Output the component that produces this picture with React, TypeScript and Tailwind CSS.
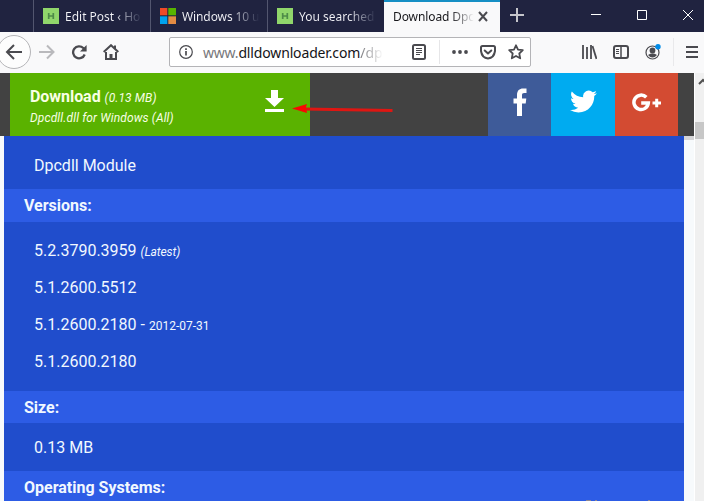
import type { ReactNode } from "react";

const UI = "font-['Noto_Sans','Open_Sans',sans-serif]";

function Icon({ size = 16, className = "", children }: { size?: number; className?: string; children: ReactNode }) {
  return (
    <svg width={size} height={size} viewBox={`0 0 ${size} ${size}`} fill="none" stroke="#4a4a4f" strokeWidth="2" className={`block shrink-0 ${className}`}>
      {children}
    </svg>
  );
}

function GreenFavicon() {
  return (
    <svg width="16" height="16" viewBox="0 0 16 16" className="block shrink-0">
      <path fill="#90d66b" d="M0 0h16v16H0z" />
      <path stroke="#4d8b48" strokeWidth="1.7" d="M5.7 5v6M10.3 5v6M5.7 8h4.6" />
    </svg>
  );
}

function WindowsFavicon() {
  return (
    <svg width="16" height="16" viewBox="0 0 16 16" className="block shrink-0">
      <path fill="#f04a27" d="M0 0h7.3v7.3H0z" />
      <path fill="#58b300" d="M8.3 0H16v7.3H8.3z" />
      <path fill="#00a2ed" d="M0 8.3h7.3V16H0z" />
      <path fill="#e38b43" d="M8.3 8.3H16V16H8.3z" />
    </svg>
  );
}

function Tab({ icon, children }: { icon: ReactNode; children: ReactNode }) {
  return (
    <div className="flex h-8 w-[117px] shrink-0 items-center border-l border-[#53566f] pl-[9px]">
      {icon}
      <span className="ml-[6px] w-[82px] whitespace-nowrap bg-gradient-to-r from-[#f4f4f8] from-60% to-[#202340] to-95% bg-clip-text pt-px text-[12px] leading-5 text-transparent">
        {children}
      </span>
    </div>
  );
}

function TabBar() {
  return (
    <div className={`flex h-8 shrink-0 bg-[#202340] pl-[33px] ${UI}`}>
      <Tab icon={<GreenFavicon />}>Edit Post ‹ Ho</Tab>
      <Tab icon={<WindowsFavicon />}><span className="tracking-[-0.1px]">Windows 10 u</span></Tab>
      <Tab icon={<GreenFavicon />}>You searched</Tab>
      <div className="flex h-8 w-[116px] shrink-0 items-center border-t-2 border-[#168fc4] bg-[#f9f9fa] pl-[9px]">
        <span className="w-[81px] whitespace-nowrap bg-gradient-to-r from-[#17171b] from-70% to-[#f9f9fa] to-100% bg-clip-text text-[12px] leading-5 tracking-[-0.1px] text-transparent">Download Dpc</span>
        <Icon size={12} className="ml-[3px]"><path d="m2 1 8 9M10 1 2 10" /></Icon>
      </div>
      <svg width="204" height="32" viewBox="0 0 204 32" fill="none" stroke="#fff" className="block shrink-0">
        <path stroke="#c5c5cb" strokeWidth="2" d="M10 15h14M17 8v14" />
        <path d="M91 14.5h10M137.500 10.500h9v9h-9zM183 10l10 10M193 10l-10 10" />
      </svg>
    </div>
  );
}

function Toolbar() {
  return (
    <div className={`flex h-[41px] shrink-0 items-center bg-[#f9f9fa] pb-px ${UI}`}>
      <svg width="32" height="40" viewBox="0 0 32 40" fill="none" className="block shrink-0">
        <circle cx="14" cy="20" r="16.500" fill="#fdfdfd" stroke="#b5b5b8" />
        <path stroke="#4a4a4f" strokeWidth="2" d="M22 20H7.500M14 13l-7 7 7 7" />
      </svg>
      <Icon className="ml-[7px]"><path stroke="#b9b9bc" d="M0 8h14M8 1.500 14.500 8 8 14.500" /></Icon>
      <Icon className="ml-4"><path strokeWidth="2.300" d="M13.700 10.500A6 6 0 1 1 12.300 4L14 5.700" /><path fill="#4a4a4f" stroke="none" d="M15.600 1v6.500H9z" /></Icon>
      <Icon className="ml-4"><path d="M.7 8 8 1.200 15.300 8" /><path d="M3 8v7h10V8" /><path strokeWidth="3" d="M8 15v-5" /><path fill="#4a4a4f" stroke="none" d="M11 1.500h2V6l-2-2z" /></Icon>
      <div className="ml-[50px] flex h-[30px] w-[362px] shrink-0 items-center rounded-[2px] border border-[#b4b4b7] bg-white pl-[9px]">
        <Icon size={14}><circle cx="7" cy="7" r="6.300" strokeWidth="1.200" /><path strokeWidth="1.700" d="M7 6v4.500M7 3.300V5" /></Icon>
        <span className="ml-[10px] w-[176px] whitespace-nowrap pt-px text-[14px] leading-5 text-[#141417]">
          <span className="text-[#77777b] tracking-[-0.2px]">www.</span><span className="tracking-[-0.15px]">dlldownloader.com</span><span className="bg-gradient-to-r from-[#77777b] to-white bg-clip-text text-transparent">/dp</span>
        </span>
        <Icon className="ml-[32px]"><rect x="2" y="1" width="12" height="14" rx="1.500" strokeWidth="2" /><path strokeWidth="1" d="M5 4.500h6M5 6.500h6M5 8.500h6M5 10.500h4" /></Icon>
        <div className="ml-3 h-6 w-px bg-[#e6e6e8]" />
        <Icon className="ml-[12px]"><g fill="#4a4a4f" stroke="none"><circle cx="2" cy="8" r="1.900" /><circle cx="8" cy="8" r="1.900" /><circle cx="14" cy="8" r="1.900" /></g></Icon>
        <Icon className="ml-3"><path d="M2.500 2h11Q15 2 15 3.500V7Q14 14 8 14.500Q2 14 1 7V3.500Q1 2 2.500 2Z" /><path strokeLinecap="round" strokeLinejoin="round" d="m4.700 6.500 3.300 3 3.300-3" /></Icon>
        <Icon className="ml-3"><path strokeWidth="1.800" strokeLinejoin="round" d="m8 1.300 2 4.300 4.800.6-3.500 3.300.9 4.800L8 12l-4.200 2.300.9-4.800-3.500-3.300L6 5.600Z" /></Icon>
      </div>
      <Icon className="ml-[50px]"><path d="M2 1v14M6 3v12M10 1v14" strokeWidth="1.800" /><path d="m11.500 2 4 13" strokeWidth="1.800" /></Icon>
      <Icon className="ml-4"><rect x="1" y="2" width="14" height="12" rx="2" /><path strokeWidth="1.500" d="M8 2v12" /><path strokeWidth="1" d="M3 5.500h3M3 7.500h3M3 9.500h3" /></Icon>
      <Icon className="ml-4"><circle cx="7.500" cy="8.500" r="6.500" strokeWidth="1.200" /><circle cx="7.500" cy="6.500" r="2.900" fill="#4a4a4f" stroke="none" /><path fill="#4a4a4f" stroke="none" d="M3 11q4.500-2.800 9 0-4.500 5-9 0" /><circle cx="13" cy="2.700" r="2.700" fill="#008be8" stroke="none" /></Icon>
      <div className="ml-3 h-7 w-px bg-[#e9e9eb]" />
      <Icon className="ml-[10px]"><path d="M2 3h12M2 8h12M2 13h12" /></Icon>
    </div>
  );
}

function DownloadBar() {
  return (
    <div className="relative z-10 flex h-[63px] w-[694px] bg-[#424242] pl-[10px]">
      <div className="flex w-[300px] justify-between bg-[#5ab200] pl-5 pt-[14px] text-[#f8ffe4]">
        <div>
          <div className="text-[16px] leading-[19px]"><b className="tracking-[-0.05px]">Download</b> <i className="text-[12px] tracking-[0.1px]">(0.13 MB)</i></div>
          <div className="mt-px text-[12px] italic leading-[19px] tracking-[0.13px]">Dpcdll.dll for Windows (All)</div>
        </div>
        <svg width="19" height="22" viewBox="0 0 19 22" fill="#fff" className="mr-[26px] mt-[3px] block">
          <path d="M6 0h7v8h6l-9.500 9L0 8h6zM0 19h19v3H0z" />
        </svg>
      </div>
      <div className="ml-[178px] flex w-[63px] items-center justify-center bg-[#3e5b99]">
        <svg width="14" height="28" viewBox="0 0 14 28" fill="#fff" className="mb-[5px] block"><path d="M4 28V15.500H.5v-5H4V7.200C4 2.500 6.500.5 10 .5h3.500v4.600h-2.300c-1.700 0-2.200.8-2.200 2.200v3.200h4.300l-.6 5H9V28z" /></svg>
      </div>
      <div className="flex w-16 items-center justify-center bg-[#00abf0]">
        <svg width="27" height="27" viewBox="0 0 24 24" fill="#fff" className="mb-[6px] block"><path d="M23.950 4.570a10 10 0 0 1-2.820.77 4.960 4.960 0 0 0 2.160-2.720 9.900 9.900 0 0 1-3.120 1.190 4.920 4.920 0 0 0-8.390 4.480A13.930 13.930 0 0 1 1.640 3.160a4.920 4.920 0 0 0 1.520 6.570 4.900 4.900 0 0 1-2.230-.61v.06a4.920 4.920 0 0 0 3.950 4.830 5 5 0 0 1-2.210.08 4.940 4.940 0 0 0 4.600 3.420A9.870 9.870 0 0 1 0 19.540a13.940 13.940 0 0 0 7.550 2.210c9.050 0 14-7.500 14-13.980l-.02-.64a9.900 9.900 0 0 0 2.420-2.560z" /></svg>
      </div>
      <div className="flex w-[63px] items-center justify-center bg-[#d34b32]">
        <svg width="30" height="20" viewBox="0 0 30 20" fill="none" stroke="#fff" className="mb-[3px] block"><path strokeWidth="3.500" d="M14.300 4.300A7.200 7.200 0 1 0 16.300 10H9.200" /><path strokeWidth="3" d="M20.500 10H29M24.700 5.800v8.400" /></svg>
      </div>
      <svg width="101" height="10" viewBox="0 0 101 10" className="absolute left-[292px] top-[31px] block">
        <path stroke="#df1612" strokeWidth="3" d="m12 5 88.500 1.500" />
        <path fill="#fa0803" d="M0 4.500 15 0l-1 3 1 6z" />
      </svg>
    </div>
  );
}

function SectionTitle({ className, children }: { className: string; children: ReactNode }) {
  return <h2 className={`bg-[#2d5ce5] pl-5 text-[16px] font-bold leading-[33px] ${className}`}>{children}</h2>;
}

function ModuleDetails() {
  return (
    <main className="relative ml-1 w-[680px] bg-[#204dcc] text-[16px] leading-[37px] text-[#f1f8ff]">
      <div className="h-[53px] pl-[30px] pt-[11px]">Dpcdll Module</div>
      <SectionTitle className="h-[33px]">Versions:</SectionTitle>
      <ul className="h-[169px] pl-[30px] pt-[10px]">
        <li className="h-[37px]">5.2.3790.3959 <i className="text-[12px] tracking-[-0.1px]">(Latest)</i></li>
        <li className="h-[37px]">5.1.2600.5512</li>
        <li className="h-[37px]">5.1.2600.2180 - <span className="text-[12px]">2012-07-31</span></li>
        <li className="h-[37px]">5.1.2600.2180</li>
      </ul>
      <SectionTitle className="h-8">Size:</SectionTitle>
      <div className="h-12 pl-[30px] pt-[6px]">0.13 MB</div>
      <SectionTitle className="h-[30px]">Operating Systems:</SectionTitle>
      <svg width="70" height="1" viewBox="0 0 70 1" className="absolute bottom-0 left-[581px] block">
        <path fill="#8f8790" d="M1 0h5v1H1zM10 0h2v1h-2zM63 0h2v1h-2z" />
      </svg>
    </main>
  );
}

export default function App() {
  return (
    <div className="flex h-[501px] w-[704px] flex-col overflow-hidden bg-[#f7fafc] font-['Roboto',sans-serif]">
      <TabBar />
      <Toolbar />
      <div className="flex h-[428px] overflow-hidden">
        <div className="w-[694px] shrink-0">
          <DownloadBar />
          <div className="flex">
            <ModuleDetails />
            <div className="h-1 w-[10px] bg-[#d5d5d7]" />
          </div>
        </div>
        <div className="w-[10px] shrink-0 border-l border-white bg-[#f0f0f0]">
          <svg width="9" height="49" viewBox="0 0 9 49" fill="none" className="block"><path stroke="#505050" strokeWidth="2" d="m4 11 4-4 4 4" /></svg>
          <div className="h-[17px] bg-[#c7c7c7]" />
        </div>
      </div>
    </div>
  );
}
